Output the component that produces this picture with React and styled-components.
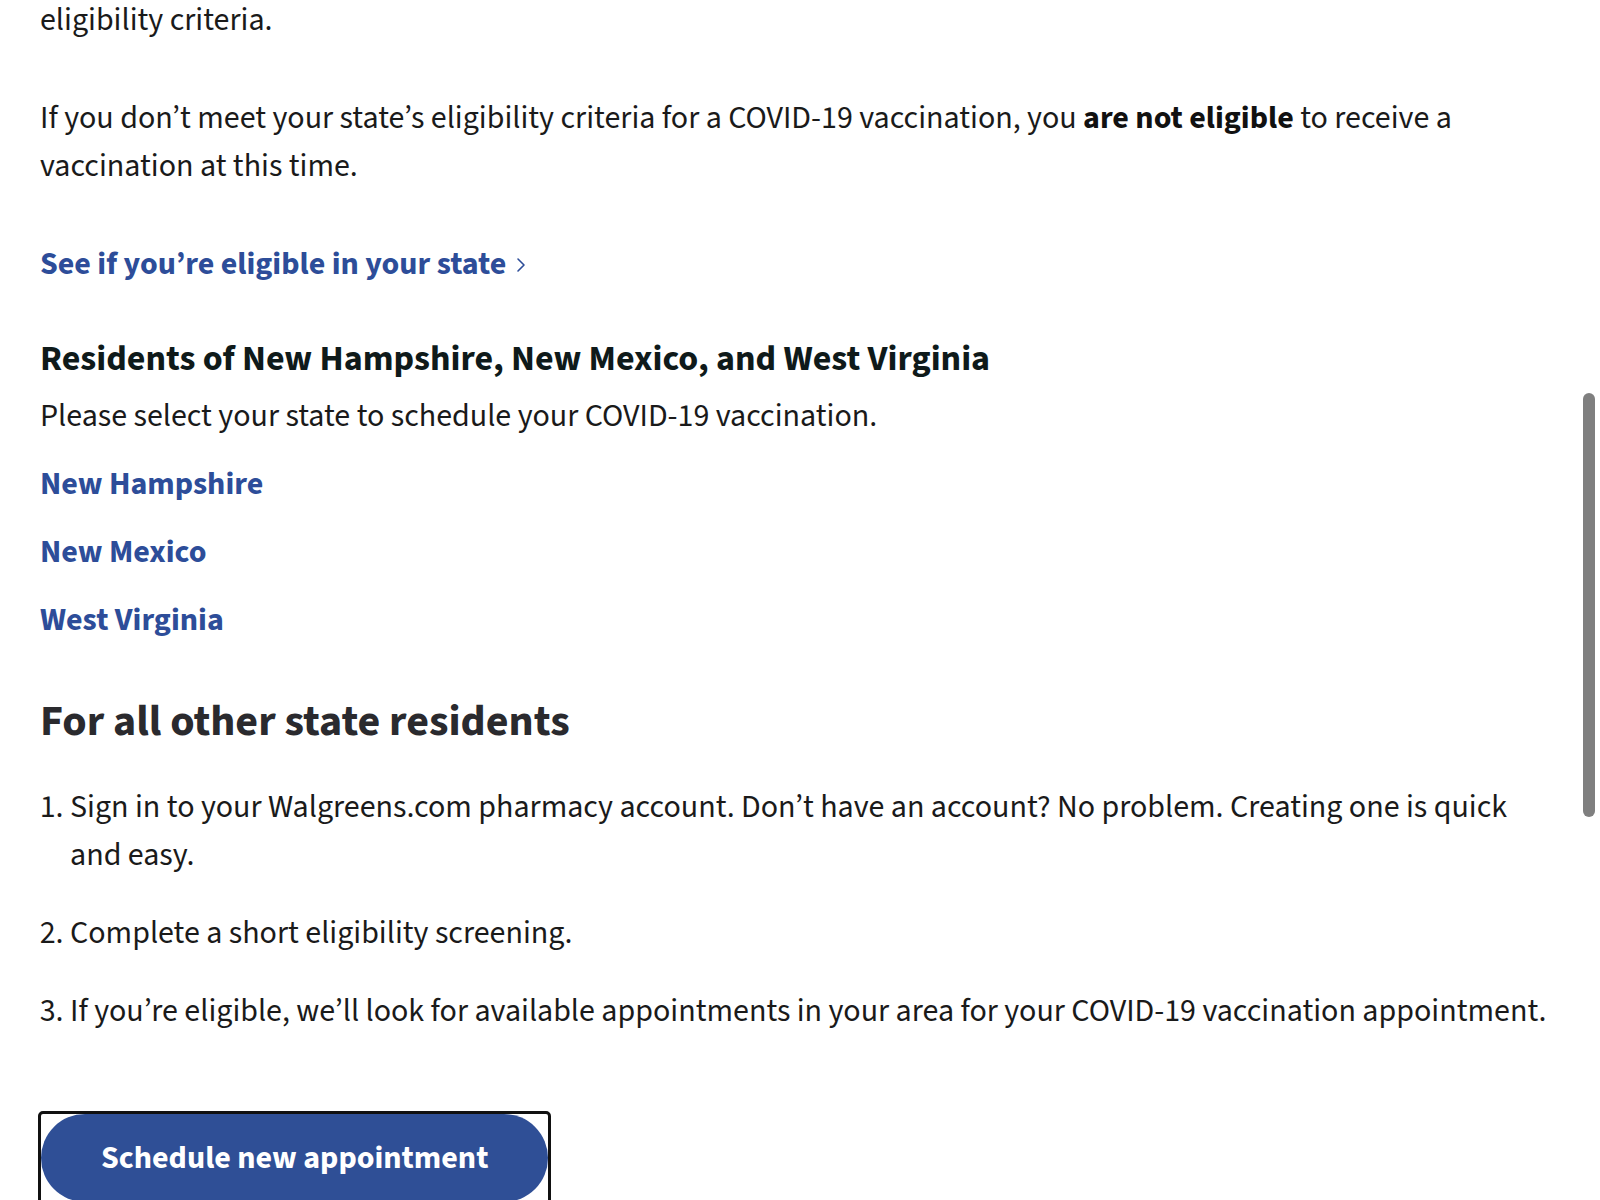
import React from 'react';
import styled, { createGlobalStyle } from 'styled-components';

const GlobalStyle = createGlobalStyle`
  html, body {
    margin: 0;
    padding: 0;
    background: #ffffff;
    overflow: hidden;
  }
  body {
    font-family: "Source Sans 3", "Source Sans Pro", "Open Sans", sans-serif;
    color: #1a1a1a;
  }
`;

const states = ['New Hampshire', 'New Mexico', 'West Virginia'];

const steps = [
    'Sign in to your Walgreens.com pharmacy account. Don’t have an account? No problem. Creating one is quick and easy.',
    'Complete a short eligibility screening.',
    'If you’re eligible, we’ll look for available appointments in your area for your COVID-19 vaccination appointment.'
];

export default function App() {
    return (
        <>
            <GlobalStyle />
            <Page>
                <Text>eligibility criteria.</Text>
                <Text>
                    If you don’t meet your state’s eligibility criteria for a COVID-19 vaccination, you <strong>are not eligible</strong> to receive a vaccination at this time.
                </Text>
                <MoreLink href="#">
                    See if you’re eligible in your state
                    <Chevron width="10" height="16" viewBox="0 0 10 16" aria-hidden="true">
                        <path d="M2 2l6 6-6 6" fill="none" stroke="currentColor" strokeWidth="1.6" strokeLinecap="round" strokeLinejoin="round" />
                    </Chevron>
                </MoreLink>

                <SubHeading>Residents of New Hampshire, New Mexico, and West Virginia</SubHeading>
                <Note>Please select your state to schedule your COVID-19 vaccination.</Note>
                <StateList>
                    {states.map((state) => (
                        <li key={state}>
                            <StateLink href="#">{state}</StateLink>
                        </li>
                    ))}
                </StateList>

                <Heading>For all other state residents</Heading>
                <Steps>
                    {steps.map((step) => (
                        <Step key={step}>{step}</Step>
                    ))}
                </Steps>

                <FocusRing>
                    <ScheduleButton type="button">Schedule new appointment</ScheduleButton>
                </FocusRing>
            </Page>
            <ScrollThumb />
        </>
    );
}

const Page = styled.main`
    display: flex;
    flex-direction: column;
    align-items: flex-start;
    padding: 0 48px 0 40px;
    margin-top: -4px;
`;

const Text = styled.p`
    margin: 0 0 50px;
    font-size: 32px;
    line-height: 48px;
    color: #1a1a1a;

    strong {
        font-weight: 700;
        color: #111;
    }
`;

const MoreLink = styled.a`
    display: inline-flex;
    align-items: center;
    gap: 10px;
    font-size: 32px;
    line-height: 48px;
    font-weight: 700;
    color: #2d4d99;
    text-decoration: none;
`;

const Chevron = styled.svg`
    margin-top: 2px;
    color: #2d4d99;
`;

const SubHeading = styled.h3`
    margin: 49px 0 11px;
    font-size: 36px;
    line-height: 44px;
    font-weight: 700;
    color: #0f1a1a;
`;

const Note = styled.p`
    margin: 0;
    font-size: 32px;
    line-height: 48px;
    color: #1a1a1a;
`;

const StateList = styled.ul`
    display: flex;
    flex-direction: column;
    gap: 20px;
    list-style: none;
    margin: 20px 0 0;
    padding: 0;
`;

const StateLink = styled.a`
    display: block;
    font-size: 32px;
    line-height: 48px;
    font-weight: 700;
    color: #2d4d99;
    text-decoration: none;
`;

const Heading = styled.h2`
    margin: 50px 0 0;
    font-size: 44px;
    line-height: 56px;
    font-weight: 700;
    color: #2a2a2e;
`;

const Steps = styled.ol`
    display: flex;
    flex-direction: column;
    gap: 30px;
    margin: 33px 0 0;
    padding: 0 0 0 30px;
    width: 100%;
    box-sizing: border-box;
`;

const Step = styled.li`
    font-size: 32px;
    line-height: 48px;
    color: #1a1a1a;
`;

const FocusRing = styled.div`
    margin: 76px 0 0 -2px;
    border: 3px solid #111;
    border-radius: 5px;
    display: flex;
`;

const ScheduleButton = styled.button`
    height: 88px;
    padding: 0 60px;
    border: none;
    border-radius: 44px;
    background: #2f4f96;
    color: #ffffff;
    font-family: inherit;
    font-size: 32px;
    font-weight: 700;
    cursor: pointer;
`;

const ScrollThumb = styled.div`
    position: fixed;
    top: 393px;
    right: 5px;
    width: 12px;
    height: 424px;
    border-radius: 6px;
    background: #7f7f7f;
`;
